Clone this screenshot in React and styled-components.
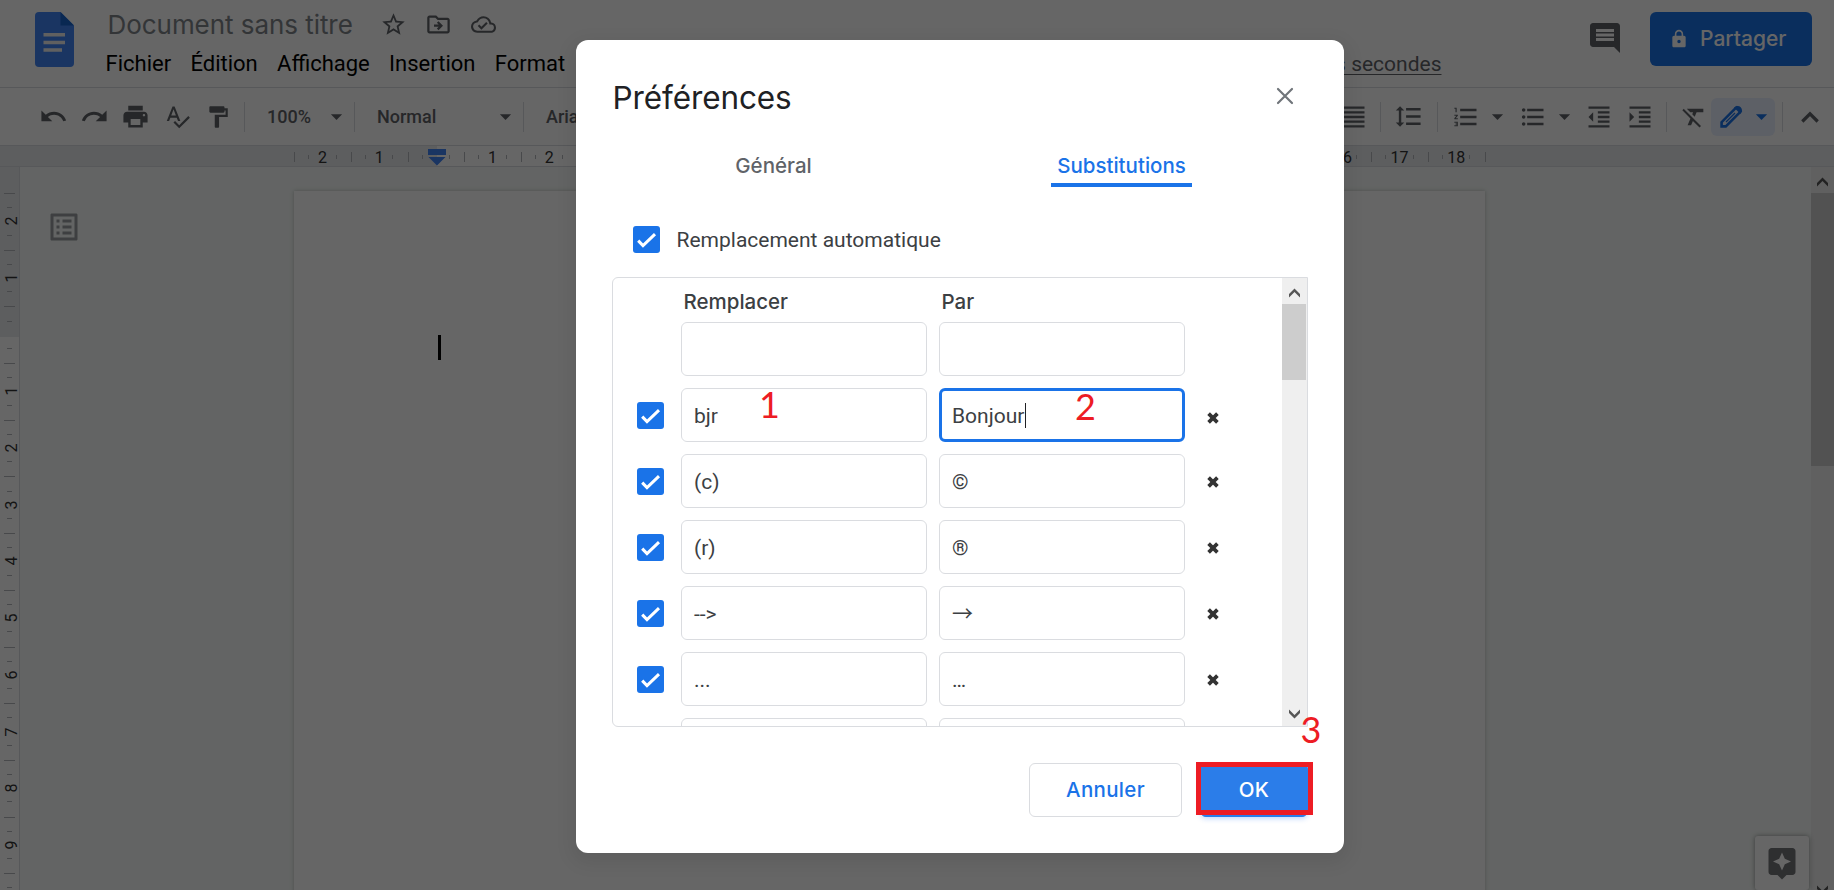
import React from "react";
import styled, { createGlobalStyle } from "styled-components";
import {
  MdStarBorder, MdOutlineDriveFileMove, MdOutlineCloudDone, MdUndo, MdRedo, MdPrint, MdSpellcheck,
  MdFormatPaint, MdArrowDropDown, MdFormatAlignJustify, MdFormatLineSpacing, MdFormatListNumbered,
  MdFormatListBulleted, MdFormatIndentDecrease, MdFormatIndentIncrease, MdFormatClear,
  MdComment, MdLock, MdAssistant, MdListAlt,
} from "react-icons/md";

const GlobalStyle = createGlobalStyle`
  *, *::before, *::after { box-sizing: border-box; }
  body { margin: 0; overflow: hidden; background: #fff; }
  svg { display: block; flex: none; }
`;

const roboto = `Roboto, "Liberation Sans", sans-serif`;
const display = `Inter, Roboto, "Liberation Sans", sans-serif`;

const Screen = styled.div`
  position: relative;
  display: flex;
  flex-direction: column;
  width: 1834px;
  height: 890px;
  overflow: hidden;
  font-family: ${roboto};
  color: #202124;
`;

/* ---------- header ---------- */
const Header = styled.header`
  display: flex;
  height: 88px;
  flex: none;
  border-bottom: 1px solid #dadce0;
`;
const LogoLink = styled.div`
  padding: 12px 32px 0 34.5px;
`;
const DocInfo = styled.div`
  width: 1336px;
  flex: none;
  white-space: nowrap;
`;
const TitleRow = styled.div`
  display: flex;
  align-items: center;
  height: 48px;
  padding-left: 2px;
  color: #5f6368;
`;
const DocTitle = styled.div`
  width: 272px;
  font: 400 26px/47px ${display};
  letter-spacing: -0.05px;
  color: #80868b;
`;
const TitleIcon = styled.span`
  display: flex;
  justify-content: center;
  align-items: center;
  width: 28px;
  margin-right: 17px;
`;
const MenuRow = styled.nav`
  display: flex;
  gap: 19.3px;
  font-size: 22px;
  line-height: 32px;
  color: #000;
`;
const LastEdit = styled.span`
  margin-left: auto;
  font-size: 21px;
  color: #5f6368;
  text-decoration: underline;
  text-underline-offset: 3px;
  text-decoration-thickness: 1px;
`;
const HeaderActions = styled.div`
  display: flex;
  align-items: flex-start;
  margin-left: auto;
  padding: 12px 22px 0 0;
`;
const CommentButton = styled.div`
  margin: 8px 27px 0 0;
  color: #5f6368;
`;
const ShareButton = styled.div`
  display: flex;
  align-items: center;
  gap: 11px;
  width: 162px;
  height: 54px;
  padding-left: 19px;
  border-radius: 6px;
  background: #1a73e8;
  color: #fff;
  font: 500 21px/54px ${display};
`;

/* ---------- toolbar ---------- */
const Toolbar = styled.div`
  display: flex;
  align-items: center;
  height: 58px;
  flex: none;
  padding: 0 10px 0 32.5px;
  border-bottom: 1px solid #dadce0;
  color: #5f6368;
`;
const ToolGroup = styled.div`
  display: flex;
  align-items: center;
  margin-left: ${(p) => (p.$end ? "auto" : "0")};
`;
const Tool = styled.span`
  display: flex;
  justify-content: center;
  width: ${(p) => p.$w || 28}px;
  margin-left: ${(p) => p.$ml || 0}px;
`;
const Divider = styled.i`
  width: 1px;
  height: 30px;
  margin-left: ${(p) => p.$ml || 0}px;
  background: #dadce0;
`;
const Select = styled.div`
  display: flex;
  align-items: center;
  justify-content: space-between;
  width: ${(p) => p.$w}px;
  padding: 0 4px 0 22px;
  font: 500 18px/28px ${roboto};
`;
const ModePill = styled.div`
  display: flex;
  align-items: center;
  gap: 5px;
  width: 64px;
  height: 38px;
  margin-left: 3px;
  padding-left: 9px;
  border-radius: 6px;
  background: #e8f0fe;
  color: #1a73e8;
`;

/* ---------- rulers ---------- */
const HRuler = styled.div`
  position: relative;
  display: flex;
  flex: none;
  height: 21px;
  padding-left: 294.2px;
  border-bottom: 1px solid #dadce0;
  background: linear-gradient(to right, #e8eaee 437px, #fff 437px, #fff 1341px, #e8eaee 1341px);
`;
const HCell = styled.div`
  display: flex;
  align-items: center;
  justify-content: space-between;
  width: 56.7px;
  flex: none;
  padding: 1px 14.17px 0 0;
`;
const HTick = styled.i`
  width: 1px;
  height: ${(p) => (p.$long ? 10 : 4)}px;
  background: #b4b7bb;
`;
const HNumber = styled.span`
  display: flex;
  justify-content: center;
  width: 0;
  padding-top: 2px;
  font-size: 16px;
  line-height: 18px;
  color: #333;
`;
const IndentMarker = styled.div`
  position: absolute;
  left: 428px;
  top: 3px;
`;
const VRuler = styled.div`
  width: 20px;
  flex: none;
  padding-top: 26px;
  overflow: hidden;
  border-right: 1px solid #dadce0;
  background: linear-gradient(#e8eaee 170px, #fff 170px);
`;
const VCell = styled.div`
  display: flex;
  flex-direction: column;
  align-items: center;
  justify-content: space-between;
  height: 56.7px;
  padding: 0 0 14.17px;
`;
const VTick = styled.i`
  width: ${(p) => (p.$long ? 11 : 5)}px;
  height: 1px;
  background: #b4b7bb;
`;
const VNumber = styled.span`
  display: flex;
  align-items: center;
  height: 0;
  padding-left: 4px;
  font-size: 16px;
  line-height: 18px;
  color: #333;
  span { transform: rotate(-90deg); }
`;

/* ---------- workspace ---------- */
const Workspace = styled.main`
  position: relative;
  display: flex;
  flex: 1;
  min-height: 0;
  background: #f7fbf9;
`;
const Canvas = styled.div`
  display: flex;
  flex: 1;
  align-items: flex-start;
  padding-left: 26px;
`;
const OutlineButton = styled.div`
  margin-top: 42px;
  color: #9b9ea3;
`;
const Page = styled.div`
  width: 1191px;
  height: 720px;
  margin: 24px 0 0 212px;
  padding: 144px;
  background: #fff;
  box-shadow: 0 0 4px rgba(60, 64, 67, 0.3);
`;
const PageCaret = styled.div`
  width: 3px;
  height: 25px;
  background: #000;
`;
const ScrollTrack = styled.div`
  display: flex;
  flex-direction: column;
  align-items: center;
  width: ${(p) => p.$w}px;
  flex: none;
  background: #efefef;
`;
const ScrollButton = styled.div`
  display: flex;
  align-items: center;
  justify-content: center;
  height: 26px;
  flex: none;
  margin: ${(p) => p.$margin || "0"};
  padding-top: ${(p) => (p.$margin ? 1 : 3)}px;
`;
const ScrollThumb = styled.div`
  align-self: flex-start;
  width: ${(p) => p.$w}px;
  height: ${(p) => p.$h}px;
  background: #cdcdcd;
`;
const ExploreButton = styled.div`
  position: absolute;
  right: 25px;
  bottom: 0;
  display: flex;
  align-items: center;
  justify-content: center;
  width: 54px;
  height: 54px;
  border-radius: 3px;
  background: #fff;
  color: #747679;
  box-shadow: 0 0 5px rgba(0, 0, 0, 0.4);
`;

/* ---------- dialog ---------- */
const Overlay = styled.div`
  position: absolute;
  inset: 0;
  padding: 40px 0 0 576px;
  background: rgba(0, 0, 0, 0.6);
`;
const Dialog = styled.section`
  width: 768px;
  height: 813px;
  padding-top: 36px;
  border-radius: 12px;
  background: #fff;
  box-shadow: 0 6px 18px 4px rgba(0, 0, 0, 0.08);
`;
const DialogHeader = styled.div`
  display: flex;
  align-items: center;
  justify-content: space-between;
  height: 44px;
  padding: 0 50px 0 36.5px;
`;
const DialogTitle = styled.h1`
  margin: 0;
  font: 400 31.5px/44px ${display};
  letter-spacing: -0.1px;
  color: #202124;
`;
const CloseButton = styled.div`
  margin-bottom: 5px;
`;
const Tabs = styled.div`
  display: grid;
  grid-template-columns: 348px 348px;
  justify-items: center;
  margin: 29px 0 0 23.5px;
`;
const Tab = styled.div`
  padding: 0 6px;
  border-bottom: 4px solid ${(p) => (p.$active ? "#1a73e8" : "transparent")};
  font: 500 20.5px/34px ${display};
  color: ${(p) => (p.$active ? "#1a73e8" : "#5f6368")};
`;
const AutoReplace = styled.div`
  display: flex;
  align-items: center;
  gap: 16.5px;
  height: 27px;
  margin: 39px 0 24px 57px;
  font-size: 21px;
  color: #3c4043;
`;
const CheckBox = styled.span`
  display: block;
  width: 27px;
  height: 27px;
  border-radius: 3px;
  background: #1a73e8;
`;
const Panel = styled.div`
  display: flex;
  width: 696px;
  height: 450px;
  margin-left: 36px;
  overflow: hidden;
  border: 1px solid #dadce0;
  border-radius: 6px 0 0 6px;
`;
const List = styled.div`
  flex: 1;
`;
const Row = styled.div`
  display: grid;
  grid-template-columns: 44px 246px 246px 55px;
  align-items: center;
  height: 54px;
  margin-bottom: 12px;
  padding-left: 24px;
`;
const Labels = styled(Row)`
  height: 44px;
  margin: 0;
  padding-top: 4px;
`;
const Label = styled.div`
  grid-column: ${(p) => p.$col};
  margin-left: ${(p) => (p.$col === 3 ? 14.5 : 2.5)}px;
  font: 500 20.5px/28px ${display};
  color: #3c4043;
`;
const Field = styled.div`
  position: relative;
  grid-column: ${(p) => p.$col};
  display: flex;
  align-items: center;
  width: 246px;
  height: 54px;
  margin-left: ${(p) => (p.$col === 3 ? 12 : 0)}px;
  padding: 1px 0 0 ${(p) => (p.$focus ? 10 : 12)}px;
  border: ${(p) => (p.$focus ? "3px solid #1a73e8" : "1px solid #dadce0")};
  border-radius: 6px;
  font: 400 21px/28px Roboto, "Noto Sans CJK JP", "DejaVu Sans", sans-serif;
  color: #3c4043;
`;
const FieldCaret = styled.i`
  width: 1px;
  height: 25px;
  margin-left: 1px;
  background: #202124;
`;
const DeleteButton = styled.span`
  grid-column: 4;
  display: flex;
  justify-content: center;
  margin-left: 12px;
  width: 55px;
  padding-top: ${(p) => (p.$low ? 5 : 1)}px;
`;
const Footer = styled.div`
  display: flex;
  justify-content: flex-end;
  gap: 18px;
  margin-top: 36px;
  padding-right: 36px;
`;
const Button = styled.div`
  width: ${(p) => (p.$primary ? 108 : 153)}px;
  height: 54px;
  border: 1px solid ${(p) => (p.$primary ? "#2b7de9" : "#dadce0")};
  border-radius: 6px;
  background: ${(p) => (p.$primary ? "#2b7de9" : "#fff")};
  box-shadow: ${(p) => (p.$primary ? "0 2px 5px rgba(66, 133, 244, 0.3)" : "none")};
  color: ${(p) => (p.$primary ? "#fff" : "#1a73e8")};
  font: 500 20.5px/52px ${display};
  letter-spacing: 0.3px;
  text-align: center;
`;
const Marked = styled.div`
  position: relative;
`;
const RedFrame = styled.div`
  position: absolute;
  left: -4px;
  top: -1px;
  width: 117px;
  height: 53px;
  border: 5px solid #ed1c24;
`;
const StepNumber = styled.span`
  position: absolute;
  left: ${(p) => p.$x}px;
  top: ${(p) => p.$y}px;
  font: 400 36px/36px Lato, sans-serif;
  color: #ed1c24;
`;

const DocsLogo = () => (
  <svg width="39" height="55" viewBox="0 0 39 55">
    <path d="M4 0H25.5L39 13.5V51a4 4 0 0 1-4 4H4a4 4 0 0 1-4-4V4a4 4 0 0 1 4-4z" fill="#4285f4" />
    <path d="M25.5 0L39 13.5H25.5z" fill="#1765cc" />
    <path d="M8.5 21h21.5v3.5H8.5zM8.5 28.7h21.5v3.5H8.5zM8.5 36.2h18.5v3.5H8.5z" fill="#f1f1f1" />
  </svg>
);
const Check = () => (
  <CheckBox>
    <svg width="27" height="27" viewBox="0 0 27 27">
      <path d="M5.2 14.6L10 19.6L22 8.2" fill="none" stroke="#fff" strokeWidth="3" />
    </svg>
  </CheckBox>
);
const Chevron = ({ down, color = "#565656" }) => (
  <svg width="11" height="10" viewBox="0 0 11 10" fill={color}>
    <path d={down ? "M0 0.5L5.5 6L11 0.5V4L5.5 9.5L0 4z" : "M0 9.5L5.5 4L11 9.5V6L5.5 0.5L0 6z"} />
  </svg>
);
const Cross = () => (
  <svg width="12" height="12" viewBox="0 0 12 12">
    <path d="M1.6 1.6L10.4 10.4M10.4 1.6L1.6 10.4" stroke="#333" strokeWidth="3.7" />
  </svg>
);
const Pencil = () => (
  <svg width="23" height="23" viewBox="0 0 23 23">
    <path d="M1.6 21.4V17.2L15.6 3.2a2.9 2.9 0 0 1 4.2 4.2L5.8 21.4z" fill="none" stroke="currentColor" strokeWidth="2.6" />
    <path d="M14 2.6L17 0.8L22.2 6L20.4 9z" fill="currentColor" />
    <path d="M6 17L15 8" stroke="currentColor" strokeWidth="1.3" />
  </svg>
);

const hCells = ["2", "1", "", ...Array.from({ length: 18 }, (_, i) => String(i + 1))];
const vCells = ["2", "1", "", ...Array.from({ length: 9 }, (_, i) => String(i + 1)), ""];
const rows = [
  { from: "bjr", to: "Bonjour", focus: true, marks: ["1", "2"] },
  { from: "(c)", to: "©" },
  { from: "(r)", to: "®" },
  { from: "-->", to: "→" },
  { from: "...", to: "…" },
];

export default function App() {
  return (
    <Screen>
      <GlobalStyle />
      <Header>
        <LogoLink><DocsLogo /></LogoLink>
        <DocInfo>
          <TitleRow>
            <DocTitle>Document sans titre</DocTitle>
            <TitleIcon><MdStarBorder size={27} /></TitleIcon>
            <TitleIcon><MdOutlineDriveFileMove size={27} /></TitleIcon>
            <TitleIcon><MdOutlineCloudDone size={25} /></TitleIcon>
          </TitleRow>
          <MenuRow>
            <span>Fichier</span><span>Édition</span><span>Affichage</span><span>Insertion</span><span>Format</span>
            <LastEdit>il y a quelques secondes</LastEdit>
          </MenuRow>
        </DocInfo>
        <HeaderActions>
          <CommentButton><MdComment size={36} /></CommentButton>
          <ShareButton><MdLock size={20} />Partager</ShareButton>
        </HeaderActions>
      </Header>

      <Toolbar>
        <ToolGroup>
          <Tool $w={41.3}><MdUndo size={29} /></Tool>
          <Tool $w={41.3}><MdRedo size={29} /></Tool>
          <Tool $w={41.3}><MdPrint size={29} /></Tool>
          <Tool $w={41.3}><MdSpellcheck size={27} /></Tool>
          <Tool $w={41.3}><MdFormatPaint size={26} /></Tool>
          <Divider $ml={5} />
          <Select $w={109}>100%<MdArrowDropDown size={27} /></Select>
          <Divider />
          <Select $w={168}>Normal<MdArrowDropDown size={27} /></Select>
          <Divider />
          <Select $w={120}>Arial</Select>
        </ToolGroup>
        <ToolGroup $end>
          <Tool><MdFormatAlignJustify size={28} /></Tool>
          <Divider $ml={12.5} />
          <Tool $ml={13}><MdFormatLineSpacing size={29} /></Tool>
          <Divider $ml={15} />
          <Tool $ml={13.5}><MdFormatListNumbered size={28} /></Tool>
          <Tool $w={26} $ml={5}><MdArrowDropDown size={27} /></Tool>
          <Tool $ml={8.5}><MdFormatListBulleted size={28} /></Tool>
          <Tool $w={26} $ml={4.5}><MdArrowDropDown size={27} /></Tool>
          <Tool $ml={7}><MdFormatIndentDecrease size={28} /></Tool>
          <Tool $ml={13}><MdFormatIndentIncrease size={28} /></Tool>
          <Divider $ml={12.5} />
          <Tool $ml={13}><MdFormatClear size={28} /></Tool>
          <ModePill><Pencil /><MdArrowDropDown size={27} /></ModePill>
          <Divider $ml={7} />
          <Tool $ml={13}>
            <svg width="18" height="12" viewBox="0 0 18 12"><path d="M1.3 10.5L9 2.8L16.7 10.5" fill="none" stroke="currentColor" strokeWidth="3.2" /></svg>
          </Tool>
        </ToolGroup>
      </Toolbar>

      <HRuler>
        {hCells.map((n, i) => (
          <HCell key={i}><HTick $long /><HTick /><HNumber>{n}</HNumber><HTick /></HCell>
        ))}
        <HCell><HTick $long /></HCell>
        <IndentMarker>
          <svg width="18" height="17" viewBox="0 0 18 17" fill="#4285f4"><path d="M0 0h18v6H0zM0.5 8h17L9 16.5z" /></svg>
        </IndentMarker>
      </HRuler>

      <Workspace>
        <VRuler>
          {vCells.map((n, i) => (
            <VCell key={i}><VTick $long /><VTick /><VNumber><span>{n}</span></VNumber><VTick /></VCell>
          ))}
        </VRuler>
        <Canvas>
          <OutlineButton><MdListAlt size={36} /></OutlineButton>
          <Page><PageCaret /></Page>
        </Canvas>
        <ScrollTrack $w={23}>
          <ScrollButton><Chevron /></ScrollButton>
          <ScrollThumb $w={23} $h={273} />
          <ScrollButton $margin="auto 0 -12px"><Chevron down /></ScrollButton>
        </ScrollTrack>
        <ExploreButton><MdAssistant size={36} /></ExploreButton>
      </Workspace>

      <Overlay>
        <Dialog>
          <DialogHeader>
            <DialogTitle>Préférences</DialogTitle>
            <CloseButton>
              <svg width="18" height="18" viewBox="0 0 18 18"><path d="M2 2L16 16M16 2L2 16" stroke="#70757a" strokeWidth="2.2" strokeLinecap="round" /></svg>
            </CloseButton>
          </DialogHeader>
          <Tabs>
            <Tab>Général</Tab>
            <Tab $active>Substitutions</Tab>
          </Tabs>
          <AutoReplace><Check />Remplacement automatique</AutoReplace>
          <Panel>
            <List>
              <Labels><Label $col={2}>Remplacer</Label><Label $col={3}>Par</Label></Labels>
              <Row><Field $col={2} /><Field $col={3} /></Row>
              {rows.map((r) => (
                <Row key={r.from}>
                  <Check />
                  <Field $col={2}>{r.from}{r.marks && <StepNumber $x={77} $y={-3}>{r.marks[0]}</StepNumber>}</Field>
                  <Field $col={3} $focus={r.focus}>
                    {r.to}{r.focus && <FieldCaret />}
                    {r.marks && <StepNumber $x={133} $y={-3}>{r.marks[1]}</StepNumber>}
                  </Field>
                  <DeleteButton $low={r.focus}><Cross /></DeleteButton>
                </Row>
              ))}
              <Row><Field $col={2} /><Field $col={3} /></Row>
            </List>
            <ScrollTrack $w={25}>
              <ScrollButton><Chevron /></ScrollButton>
              <ScrollThumb $w={24} $h={76} />
              <ScrollButton $margin="auto 0 0"><Chevron down /></ScrollButton>
            </ScrollTrack>
          </Panel>
          <Footer>
            <Button>Annuler</Button>
            <Marked>
              <Button $primary>OK</Button>
              <RedFrame />
              <StepNumber $x={100.5} $y={-52}>3</StepNumber>
            </Marked>
          </Footer>
        </Dialog>
      </Overlay>
    </Screen>
  );
}
